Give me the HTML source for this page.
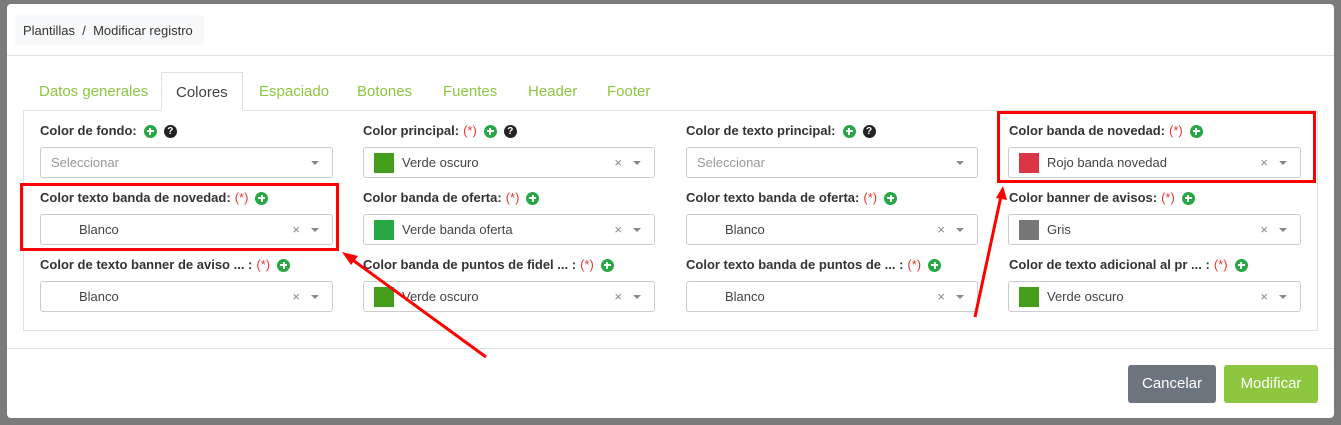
<!DOCTYPE html>
<html><head><meta charset="utf-8"><style>
*{box-sizing:border-box;margin:0;padding:0}
body{width:1341px;height:425px;background:#7b7b7b;font-family:"Liberation Sans",sans-serif;position:relative;overflow:hidden;font-size:13px;color:#333}
.modal{position:absolute;left:7px;top:4px;width:1327px;height:414px;background:#fff;border-radius:4px}
.bc{position:absolute;left:8px;top:11px;width:189px;height:31px;background:#f8f9fa;border-radius:3px;font-size:13px;line-height:31px;padding-left:8px;color:#333}
.hr{position:absolute;left:0;width:1327px;height:1px;background:#dee2e6}
.tab{position:absolute;top:68px;height:39px;line-height:39px;font-size:15px;color:#8dc63f}
.tab.act{color:#444;border:1px solid #dee2e6;border-bottom:1px solid #fff;background:#fff;padding:0 14px;z-index:2}
.pane{position:absolute;left:16px;top:106px;width:1295px;height:221px;border:1px solid #dee2e6}
.lbl{position:absolute;font-size:13px;font-weight:bold;color:#333;white-space:nowrap;height:16px;line-height:16px;display:flex;align-items:center}
.lbl .r{color:#e53935;font-weight:normal;margin-left:4px}
.ic{display:block;width:13px;height:13px;border-radius:50%;margin-left:7px;position:relative;flex:none}
.pl{background:#28a745}
.pl:before{content:"";position:absolute;left:3px;top:5.5px;width:7px;height:2px;background:#fff}
.pl:after{content:"";position:absolute;left:5.5px;top:3px;width:2px;height:7px;background:#fff}
.q{background:#222;color:#fff;font-size:10px;line-height:13px;text-align:center;font-weight:bold}
.sel{position:absolute;height:31px;border:1px solid #ccc;border-radius:3px;background:#fff;font-size:13px;line-height:29px;color:#444}
.sel .sw{position:absolute;left:10px;top:5px;width:20px;height:20px}
.sel .t{position:absolute;left:38px}
.sel .ph{position:absolute;left:10px;color:#999}
.sel .x{position:absolute;right:32px;color:#888;font-size:13px}
.sel .ar{position:absolute;right:13px;top:13px;border-left:4px solid transparent;border-right:4px solid transparent;border-top:4px solid #888}
.btn{position:absolute;top:361px;height:38px;border-radius:3px;color:#fff;font-size:15px;line-height:38px;text-align:center}
.rb{position:absolute;border:3px solid #f00}
</style></head><body>
<div class="modal">
<div class="bc">Plantillas&nbsp; / &nbsp;Modificar registro</div>
<div class="hr" style="top:51px"></div>
<div class="tab" style="left:32px">Datos generales</div>
<div class="tab act" style="left:154px">Colores</div>
<div class="tab" style="left:252px">Espaciado</div>
<div class="tab" style="left:350px">Botones</div>
<div class="tab" style="left:436px">Fuentes</div>
<div class="tab" style="left:521px">Header</div>
<div class="tab" style="left:600px">Footer</div>
<div class="pane"></div>
<div class="hr" style="top:344px"></div>
<div class="btn" style="left:1121px;width:88px;background:#6c757d">Cancelar</div>
<div class="btn" style="left:1217px;width:94px;background:#8dc63f">Modificar</div>
</div>

<div class="lbl" style="left:40px;top:123px">Color de fondo:<span class="ic pl"></span><span class="ic q">?</span></div>
<div class="lbl" style="left:363px;top:123px">Color principal:<span class="r">(*)</span><span class="ic pl"></span><span class="ic q">?</span></div>
<div class="lbl" style="left:686px;top:123px">Color de texto principal:<span class="ic pl"></span><span class="ic q">?</span></div>
<div class="lbl" style="left:1009px;top:123px">Color banda de novedad:<span class="r">(*)</span><span class="ic pl"></span></div>

<div class="sel" style="left:40px;top:147px;width:293px"><span class="ph">Seleccionar</span><span class="ar"></span></div>
<div class="sel" style="left:363px;top:147px;width:292px"><span class="sw" style="background:#459e1b"></span><span class="t">Verde oscuro</span><span class="x">×</span><span class="ar"></span></div>
<div class="sel" style="left:686px;top:147px;width:292px"><span class="ph">Seleccionar</span><span class="ar"></span></div>
<div class="sel" style="left:1008px;top:147px;width:293px"><span class="sw" style="background:#dc3545"></span><span class="t">Rojo banda novedad</span><span class="x">×</span><span class="ar"></span></div>

<div class="lbl" style="left:40px;top:190px">Color texto banda de novedad:<span class="r">(*)</span><span class="ic pl"></span></div>
<div class="lbl" style="left:363px;top:190px">Color banda de oferta:<span class="r">(*)</span><span class="ic pl"></span></div>
<div class="lbl" style="left:686px;top:190px">Color texto banda de oferta:<span class="r">(*)</span><span class="ic pl"></span></div>
<div class="lbl" style="left:1009px;top:190px">Color banner de avisos:<span class="r">(*)</span><span class="ic pl"></span></div>

<div class="sel" style="left:40px;top:214px;width:293px"><span class="t">Blanco</span><span class="x">×</span><span class="ar"></span></div>
<div class="sel" style="left:363px;top:214px;width:292px"><span class="sw" style="background:#28a745"></span><span class="t">Verde banda oferta</span><span class="x">×</span><span class="ar"></span></div>
<div class="sel" style="left:686px;top:214px;width:292px"><span class="t">Blanco</span><span class="x">×</span><span class="ar"></span></div>
<div class="sel" style="left:1008px;top:214px;width:293px"><span class="sw" style="background:#777"></span><span class="t">Gris</span><span class="x">×</span><span class="ar"></span></div>

<div class="lbl" style="left:40px;top:257px">Color de texto banner de aviso ... :<span class="r">(*)</span><span class="ic pl"></span></div>
<div class="lbl" style="left:363px;top:257px">Color banda de puntos de fidel ... :<span class="r">(*)</span><span class="ic pl"></span></div>
<div class="lbl" style="left:686px;top:257px">Color texto banda de puntos de ... :<span class="r">(*)</span><span class="ic pl"></span></div>
<div class="lbl" style="left:1009px;top:257px">Color de texto adicional al pr ... :<span class="r">(*)</span><span class="ic pl"></span></div>

<div class="sel" style="left:40px;top:281px;width:293px"><span class="t">Blanco</span><span class="x">×</span><span class="ar"></span></div>
<div class="sel" style="left:363px;top:281px;width:292px"><span class="sw" style="background:#459e1b"></span><span class="t">Verde oscuro</span><span class="x">×</span><span class="ar"></span></div>
<div class="sel" style="left:686px;top:281px;width:292px"><span class="t">Blanco</span><span class="x">×</span><span class="ar"></span></div>
<div class="sel" style="left:1008px;top:281px;width:293px"><span class="sw" style="background:#459e1b"></span><span class="t">Verde oscuro</span><span class="x">×</span><span class="ar"></span></div>

<div class="rb" style="left:20px;top:183px;width:319px;height:68px"></div>
<div class="rb" style="left:997px;top:111px;width:319px;height:72px"></div>

<svg width="1341" height="425" style="position:absolute;left:0;top:0">
<line x1="486" y1="357" x2="350" y2="258" stroke="#f00" stroke-width="3"/>
<polygon points="342,252 358,256 351,265" fill="#f00"/>
<line x1="975" y1="317" x2="1001" y2="196" stroke="#f00" stroke-width="3"/>
<polygon points="1003,186 1007,200 996,198" fill="#f00"/>
</svg>
</body></html>
